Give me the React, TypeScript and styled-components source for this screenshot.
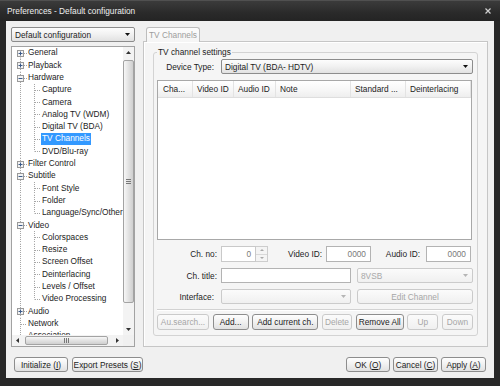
import React from 'react';
import styled, { createGlobalStyle } from 'styled-components';

const ROW_H = 12.3;

const GlobalStyle = createGlobalStyle`
  html, body { margin: 0; padding: 0; }
  body {
    width: 500px;
    height: 386px;
    overflow: hidden;
    background: #282828;
    font-family: "Liberation Sans", Arial, sans-serif;
    font-size: 8.3px;
    color: #1c1c1c;
  }
  * { box-sizing: border-box; }
`;

const Window = styled.div`
  width: 500px;
  height: 386px;
  display: flex;
  flex-direction: column;
  background: #282828;
`;

const TitleBar = styled.div`
  height: 21px;
  flex: none;
  display: flex;
  align-items: center;
  justify-content: space-between;
  padding: 0 9px 0 7px;
  background: linear-gradient(#3b3b3b, #2a2a2a 60%, #242424);
  border-top: 1px solid #505050;
  color: #eeeeee;
`;

const Frame = styled.div`
  flex: 1;
  display: flex;
  padding: 0 6px 8px 6px;
  min-height: 0;
`;

const Body = styled.div`
  flex: 1;
  display: flex;
  flex-direction: column;
  gap: 10px;
  padding: 6px 6px 6px 5px;
  background: #f0f0f0;
`;

const Main = styled.div`
  flex: 1;
  display: flex;
  gap: 8px;
  min-height: 0;
`;

const LeftCol = styled.div`
  width: 124px;
  display: flex;
  flex-direction: column;
  gap: 4px;
`;

const RightCol = styled.div`
  flex: 1;
  display: flex;
  flex-direction: column;
`;

/* ---------- combos, inputs, buttons ---------- */

const Combo = styled.div<{ $disabled?: boolean; $h?: number }>`
  height: ${p => p.$h ?? 15}px;
  display: flex;
  align-items: center;
  justify-content: space-between;
  padding: 0 4px 0 3px;
  border: 1px solid ${p => (p.$disabled ? '#cbcbcb' : '#8c8c8c')};
  border-radius: 2px;
  background: ${p =>
    p.$disabled
      ? 'linear-gradient(#fbfbfb, #f0f0f0)'
      : 'linear-gradient(#fdfdfd, #f1f1f1 50%, #e1e1e1)'};
  color: ${p => (p.$disabled ? '#a8a8a8' : '#1c1c1c')};
  white-space: nowrap;
`;

const Arrow = ({ color = '#111' }: { color?: string }) => (
  <svg width="5" height="3" viewBox="0 0 5 3">
    <path d="M0 0H5L2.5 3Z" fill={color} />
  </svg>
);

const TextBox = styled.div<{ $w?: number; $disabled?: boolean }>`
  ${p => (p.$w ? `width: ${p.$w}px;` : 'flex: 1;')}
  height: 100%;
  display: flex;
  align-items: center;
  justify-content: flex-end;
  padding: 0 4px;
  background: #ffffff;
  border: 1px solid ${p => (p.$disabled ? '#c9c9c9' : '#b3b3b3')};
  color: #7a7a7a;
`;

const Btn = styled.button<{ $w?: number }>`
  width: ${p => (p.$w ? `${p.$w}px` : 'auto')};
  height: 100%;
  padding: 0;
  font: inherit;
  color: #1c1c1c;
  border: 1px solid #8d8d8d;
  border-radius: 3px;
  background: linear-gradient(#fefefe, #f2f2f2 45%, #e1e1e1);
  white-space: nowrap;
  &:disabled {
    color: #a6a6a6;
    border-color: #cacaca;
    background: linear-gradient(#fbfbfb, #f0f0f0);
  }
`;

/* ---------- tree ---------- */

const TreeBox = styled.div`
  flex: 1;
  min-height: 0;
  display: grid;
  grid-template-columns: 1fr 11px;
  grid-template-rows: 1fr 11px;
  border: 1px solid #a2a2a2;
  background: #ffffff;
`;

const TreeContent = styled.div`
  overflow: hidden;
  padding-left: 1px;
`;

const TreeRow = styled.div`
  height: ${ROW_H}px;
  display: flex;
  align-items: center;
  white-space: nowrap;
`;

const TreeLabel = styled.span<{ $sel?: boolean }>`
  height: 11.5px;
  line-height: 11.5px;
  padding: 0 1px;
  background: ${p => (p.$sel ? '#3399ff' : 'transparent')};
  color: ${p => (p.$sel ? '#ffffff' : '#1c1c1c')};
`;

const GuideSvg = styled.svg`
  flex: none;
  display: block;
`;

type GuideKind = 'first' | 'tee' | 'ell' | 'pipe';

function Guide({ kind, exp }: { kind: GuideKind; exp?: '+' | '-' }) {
  const mid = 6.5;
  const top = kind === 'first' ? mid : 0;
  const bot = kind === 'ell' ? mid : ROW_H;
  const dot = { stroke: '#a4a4a4', strokeWidth: 1, strokeDasharray: '1 1' };
  return (
    <GuideSvg width="14" height={ROW_H} viewBox={`0 0 14 ${ROW_H}`}>
      <line x1="7.5" x2="7.5" y1={top} y2={bot} {...dot} />
      {kind !== 'pipe' && <line x1={exp ? 11 : 8} x2="14" y1={mid} y2={mid} {...dot} />}
      {exp && (
        <g>
          <rect x="4.5" y="3.5" width="6" height="6" fill="#f4f4f4" stroke="#9a9a9a" />
          <line x1="5.5" x2="9.5" y1="6.5" y2="6.5" stroke="#3a5a8a" />
          {exp === '+' && <line x1="7.5" x2="7.5" y1="4.5" y2="8.5" stroke="#3a5a8a" />}
        </g>
      )}
    </GuideSvg>
  );
}

interface Node {
  label: string;
  level: 0 | 1;
  exp?: '+' | '-';
  last?: boolean;
  sel?: boolean;
}

const tree: Node[] = [
  { label: 'General', level: 0, exp: '+' },
  { label: 'Playback', level: 0, exp: '+' },
  { label: 'Hardware', level: 0, exp: '-' },
  { label: 'Capture', level: 1 },
  { label: 'Camera', level: 1 },
  { label: 'Analog TV (WDM)', level: 1 },
  { label: 'Digital TV (BDA)', level: 1 },
  { label: 'TV Channels', level: 1, sel: true },
  { label: 'DVD/Blu-ray', level: 1, last: true },
  { label: 'Filter Control', level: 0, exp: '+' },
  { label: 'Subtitle', level: 0, exp: '-' },
  { label: 'Font Style', level: 1 },
  { label: 'Folder', level: 1 },
  { label: 'Language/Sync/Other', level: 1, last: true },
  { label: 'Video', level: 0, exp: '-' },
  { label: 'Colorspaces', level: 1 },
  { label: 'Resize', level: 1 },
  { label: 'Screen Offset', level: 1 },
  { label: 'Deinterlacing', level: 1 },
  { label: 'Levels / Offset', level: 1 },
  { label: 'Video Processing', level: 1, last: true },
  { label: 'Audio', level: 0, exp: '+' },
  { label: 'Network', level: 0 },
  { label: 'Association', level: 0 },
];

/* ---------- scrollbars ---------- */

const VScroll = styled.div`
  display: flex;
  flex-direction: column;
  background: #f3f3f3;
`;

const HScroll = styled.div`
  display: flex;
  align-items: center;
  background: #f3f3f3;
`;

const ScrollArrow = styled.div`
  flex: none;
  width: 11px;
  height: 11px;
  display: flex;
  align-items: center;
  justify-content: center;
`;

const Track = styled.div<{ $dir: 'v' | 'h' }>`
  flex: 1;
  display: flex;
  flex-direction: ${p => (p.$dir === 'v' ? 'column' : 'row')};
  padding: ${p => (p.$dir === 'v' ? '2px 0 0 0' : '0 0 0 2px')};
`;

const Thumb = styled.div<{ $dir: 'v' | 'h'; $len: number }>`
  ${p => (p.$dir === 'v' ? `height: ${p.$len}px; width: 11px;` : `width: ${p.$len}px; height: 9px;`)}
  display: flex;
  align-items: center;
  justify-content: center;
  border: 1px solid #a3a3a3;
  border-radius: 2px;
  background: ${p =>
    p.$dir === 'v'
      ? 'linear-gradient(to right, #f7f7f7, #e2e2e2 50%, #cfcfcf)'
      : 'linear-gradient(#f7f7f7, #e2e2e2 50%, #cfcfcf)'};
`;

const Corner = styled.div`
  background: #f0f0f0;
`;

const Tri = ({ dir }: { dir: 'up' | 'down' | 'left' | 'right' }) => {
  const d = {
    up: 'M0 3H5L2.5 0Z',
    down: 'M0 0H5L2.5 3Z',
    left: 'M3 0V5L0 2.5Z',
    right: 'M0 0V5L3 2.5Z',
  }[dir];
  const vert = dir === 'up' || dir === 'down';
  return (
    <svg width={vert ? 5 : 3} height={vert ? 3 : 5} viewBox={vert ? '0 0 5 3' : '0 0 3 5'}>
      <path d={d} fill="#333" />
    </svg>
  );
};

const Grip = ({ dir }: { dir: 'v' | 'h' }) =>
  dir === 'v' ? (
    <svg width="5" height="5" viewBox="0 0 5 5">
      <path d="M0 0.5H5M0 2.5H5M0 4.5H5" stroke="#777" />
    </svg>
  ) : (
    <svg width="5" height="5" viewBox="0 0 5 5">
      <path d="M0.5 0V5M2.5 0V5M4.5 0V5" stroke="#777" />
    </svg>
  );

/* ---------- tab & group ---------- */

const TabStrip = styled.div`
  height: 14px;
  display: flex;
  padding-left: 3px;
  position: relative;
  z-index: 1;
`;

const Tab = styled.div`
  height: 15px;
  padding: 0 2px;
  display: flex;
  align-items: center;
  border: 1px solid #bdbdbd;
  border-bottom: none;
  border-radius: 3px 3px 0 0;
  background: linear-gradient(#fcfcfc, #f5f5f5);
  color: #9d9d9d;
`;

const Panel = styled.div`
  flex: 1;
  display: flex;
  flex-direction: column;
  padding: 5px 9px 10px 9px;
  border: 1px solid #c6c6c6;
  background: #f5f5f5;
  box-shadow: inset 1px 1px 0 #ffffff;
`;

const Group = styled.fieldset`
  flex: 1;
  display: flex;
  flex-direction: column;
  gap: 6px;
  margin: 0;
  min-width: 0;
  padding: 2px 4px 5px 3px;
  border: 1px solid #d3d3d3;
  border-radius: 3px;
`;

const Legend = styled.legend`
  padding: 0 1px;
  line-height: 10px;
`;

const FormRow = styled.div<{ $h: number }>`
  height: ${p => p.$h}px;
  display: grid;
  grid-template-columns: 60px 1fr;
  column-gap: 4px;
  align-items: center;
`;

const Label = styled.span<{ $pr?: number; $w?: number }>`
  ${p => (p.$w ? `width: ${p.$w}px; flex: none;` : '')}
  text-align: right;
  padding-right: ${p => p.$pr ?? 0}px;
  white-space: nowrap;
`;

const Fields = styled.div<{ $gap?: number }>`
  height: 100%;
  display: flex;
  align-items: center;
  gap: ${p => p.$gap ?? 0}px;
`;

const Spin = styled.div`
  width: 47px;
  height: 100%;
  display: flex;
`;

const SpinButtons = styled.div`
  width: 12px;
  display: flex;
  flex-direction: column;
  border: 1px solid #cdcdcd;
  border-left: none;
  background: #f4f4f4;
`;

const SpinHalf = styled.div<{ $top?: boolean }>`
  flex: 1;
  display: flex;
  align-items: center;
  justify-content: center;
  border-bottom: ${p => (p.$top ? '1px solid #d8d8d8' : 'none')};
`;

const List = styled.div`
  flex: 1;
  min-height: 0;
  border: 1px solid #a8a8a8;
  background: #ffffff;
  margin-right: 1px;
`;

const ListHeader = styled.div`
  height: 17px;
  display: flex;
  background: linear-gradient(#ffffff, #f6f6f6 60%, #eeeeee);
  border-bottom: 1px solid #dedede;
`;

const HeadCell = styled.div<{ $w?: number; $pl?: number }>`
  ${p => (p.$w ? `width: ${p.$w}px;` : 'flex: 1;')}
  display: flex;
  align-items: center;
  padding-left: ${p => p.$pl ?? 4}px;
  border-right: 1px solid #e3e3e3;
  white-space: nowrap;
  overflow: hidden;
`;

const Separator = styled.div`
  height: 1px;
  margin: -1px 0 -2px 0;
  background: #d2d2d2;
  box-shadow: 0 1px 0 #ffffff;
`;

const ButtonRow = styled.div`
  height: 16px;
  display: flex;
  justify-content: space-between;
`;

const Footer = styled.div`
  height: 15px;
  display: flex;
  justify-content: space-between;
  padding: 0 2px 0 3px;
`;

const FooterGroup = styled.div<{ $gap: number }>`
  display: flex;
  gap: ${p => p.$gap}px;
`;

const CloseIcon = () => (
  <svg width="6" height="6" viewBox="0 0 6 6">
    <path d="M0.5 0.5L5.5 5.5M5.5 0.5L0.5 5.5" stroke="#d0d0d0" strokeWidth="1.2" />
  </svg>
);

export default function App() {
  return (
    <>
      <GlobalStyle />
      <Window>
        <TitleBar>
          <span>Preferences - Default configuration</span>
          <CloseIcon />
        </TitleBar>
        <Frame>
          <Body>
            <Main>
              <LeftCol>
                <Combo>
                  <span>Default configuration</span>
                  <Arrow />
                </Combo>
                <TreeBox>
                  <TreeContent>
                    {tree.map((n, i) => (
                      <TreeRow key={n.label}>
                        {n.level === 0 ? (
                          <Guide kind={i === 0 ? 'first' : 'tee'} exp={n.exp} />
                        ) : (
                          <>
                            <Guide kind="pipe" />
                            <Guide kind={n.last ? 'ell' : 'tee'} />
                          </>
                        )}
                        <TreeLabel $sel={n.sel}>{n.label}</TreeLabel>
                      </TreeRow>
                    ))}
                  </TreeContent>
                  <VScroll>
                    <ScrollArrow>
                      <Tri dir="up" />
                    </ScrollArrow>
                    <Track $dir="v">
                      <Thumb $dir="v" $len={243}>
                        <Grip dir="v" />
                      </Thumb>
                    </Track>
                    <ScrollArrow>
                      <Tri dir="down" />
                    </ScrollArrow>
                  </VScroll>
                  <HScroll>
                    <ScrollArrow>
                      <Tri dir="left" />
                    </ScrollArrow>
                    <Track $dir="h">
                      <Thumb $dir="h" $len={83}>
                        <Grip dir="h" />
                      </Thumb>
                    </Track>
                    <ScrollArrow>
                      <Tri dir="right" />
                    </ScrollArrow>
                  </HScroll>
                  <Corner />
                </TreeBox>
              </LeftCol>

              <RightCol>
                <TabStrip>
                  <Tab>TV Channels</Tab>
                </TabStrip>
                <Panel>
                  <Group>
                    <Legend>TV channel settings</Legend>
                    <FormRow $h={15}>
                      <Label $pr={3}>Device Type:</Label>
                      <Combo>
                        <span>Digital TV (BDA- HDTV)</span>
                        <Arrow />
                      </Combo>
                    </FormRow>

                    <List>
                      <ListHeader>
                        <HeadCell $w={35} $pl={5}>Cha...</HeadCell>
                        <HeadCell $w={41}>Video ID</HeadCell>
                        <HeadCell $w={42}>Audio ID</HeadCell>
                        <HeadCell $w={75}>Note</HeadCell>
                        <HeadCell $w={55}>Standard ...</HeadCell>
                        <HeadCell>Deinterlacing</HeadCell>
                      </ListHeader>
                    </List>

                    <FormRow $h={16}>
                      <Label>Ch. no:</Label>
                      <Fields>
                        <Spin>
                          <TextBox $disabled>0</TextBox>
                          <SpinButtons>
                            <SpinHalf $top>
                              <svg width="4" height="2" viewBox="0 0 4 2">
                                <path d="M0 2H4L2 0Z" fill="#a8a8a8" />
                              </svg>
                            </SpinHalf>
                            <SpinHalf>
                              <svg width="4" height="2" viewBox="0 0 4 2">
                                <path d="M0 0H4L2 2Z" fill="#a8a8a8" />
                              </svg>
                            </SpinHalf>
                          </SpinButtons>
                        </Spin>
                        <Label $w={58} $pr={4}>Video ID:</Label>
                        <TextBox $w={45}>0000</TextBox>
                        <Label $w={55} $pr={6}>Audio ID:</Label>
                        <TextBox $w={45}>0000</TextBox>
                      </Fields>
                    </FormRow>

                    <FormRow $h={15}>
                      <Label>Ch. title:</Label>
                      <Fields $gap={6}>
                        <TextBox $w={130} />
                        <Combo $disabled style={{ flex: 1 }}>
                          <span>8VSB</span>
                          <Arrow color="#b5b5b5" />
                        </Combo>
                      </Fields>
                    </FormRow>

                    <FormRow $h={15}>
                      <Label $pr={3}>Interface:</Label>
                      <Fields $gap={6}>
                        <Combo $disabled style={{ width: 130 }}>
                          <span />
                          <Arrow color="#b5b5b5" />
                        </Combo>
                        <Btn disabled style={{ flex: 1 }}>
                          Edit Channel
                        </Btn>
                      </Fields>
                    </FormRow>

                    <Separator />

                    <ButtonRow>
                      <Btn $w={52} disabled>Au.search...</Btn>
                      <Btn $w={36}>Add...</Btn>
                      <Btn $w={66}>Add current ch.</Btn>
                      <Btn $w={30} disabled>Delete</Btn>
                      <Btn $w={48}>Remove All</Btn>
                      <Btn $w={31} disabled>Up</Btn>
                      <Btn $w={31} disabled>Down</Btn>
                    </ButtonRow>
                  </Group>
                </Panel>
              </RightCol>
            </Main>

            <Footer>
              <FooterGroup $gap={4}>
                <Btn $w={54}>
                  Initialize (<u>I</u>)
                </Btn>
                <Btn $w={71}>
                  Export Presets (<u>S</u>)
                </Btn>
              </FooterGroup>
              <FooterGroup $gap={3}>
                <Btn $w={44}>
                  OK (<u>O</u>)
                </Btn>
                <Btn $w={45}>
                  Cancel (<u>C</u>)
                </Btn>
                <Btn $w={45}>
                  Apply (<u>A</u>)
                </Btn>
              </FooterGroup>
            </Footer>
          </Body>
        </Frame>
      </Window>
    </>
  );
}
